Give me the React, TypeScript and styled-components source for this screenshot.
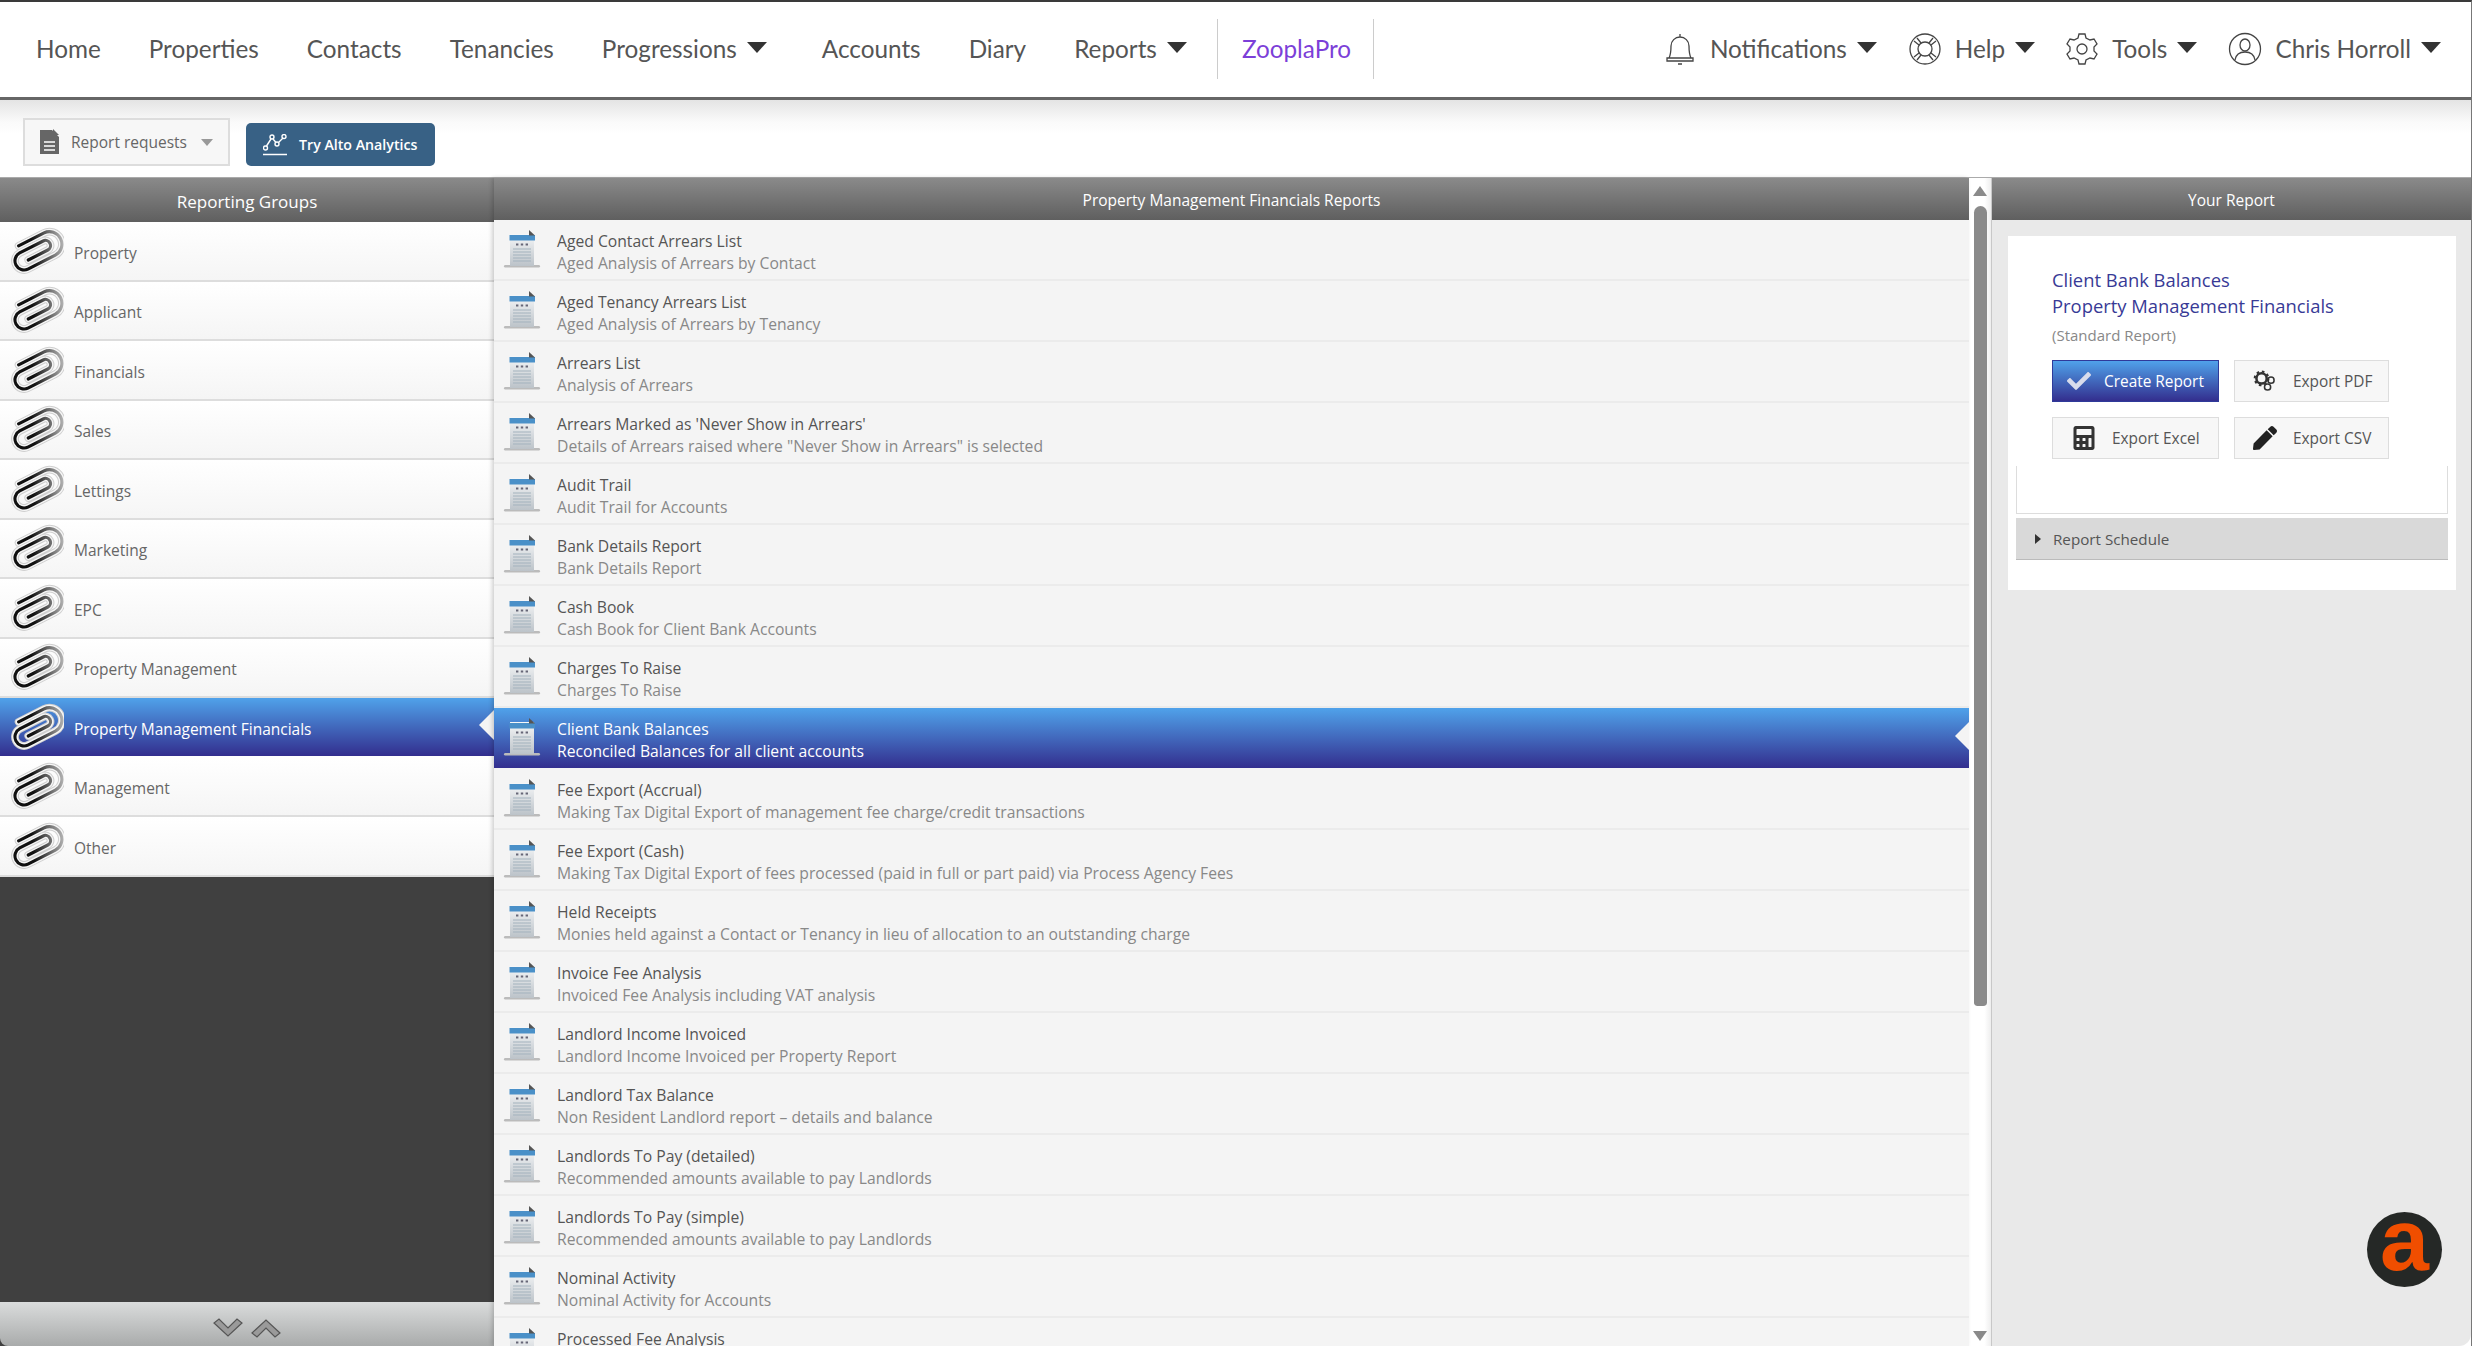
import styled, { createGlobalStyle } from 'styled-components';
import { FaCalculator, FaPen, FaCheck } from 'react-icons/fa';

const GlobalStyle = createGlobalStyle`
  html, body, #root {
    margin: 0;
    height: 100%;
    overflow: hidden;
  }
  body {
    font-family: "Open Sans", "Liberation Sans", sans-serif;
    background: #5c7690;
  }
`;

const Shell = styled.div`
  position: relative;
  height: 100%;
  display: grid;
  grid-template-rows: 98px 78px 1fr;
  box-sizing: border-box;
  border-top: 2px solid #3a3a3a;
  border-right: 1px solid #777;
  background: #fff;
  overflow: hidden;
`;

const NavBar = styled.nav`
  display: flex;
  align-items: center;
  justify-content: space-between;
  border-bottom: 3px solid #666;
  padding: 0 30px 2px 12px;
  font-family: Lato, "Open Sans", sans-serif;
  font-size: 24.3px;
  color: #555;
  background: #fff;
  position: relative;
  z-index: 2;
`;

const NavGroup = styled.div`
  display: flex;
  align-items: center;
`;

const NavLink = styled.a<{ $accent?: boolean; $tail?: number }>`
  display: flex;
  align-items: center;
  white-space: nowrap;
  padding: 0 ${(p) => p.$tail ?? 24}px 0 24px;
  color: ${(p) => (p.$accent ? '#7c3fd8' : '#555')};
`;

const Divider = styled.span`
  width: 1px;
  height: 60px;
  background: #ccc;
`;

const Caret = styled.span`
  width: 0;
  height: 0;
  margin: 0 0 2px 10px;
  border-left: 10px solid transparent;
  border-right: 10px solid transparent;
  border-top: 11px solid #333;
`;

const NavIcon = styled.svg`
  width: 34px;
  height: 34px;
  margin-right: 13px;
  fill: none;
  stroke: #444;
  stroke-width: 1.3;
`;

const ToolRow = styled.div`
  display: flex;
  align-items: flex-start;
  gap: 16px;
  padding: 18px 0 0 23px;
  background: linear-gradient(#e4e4e4, #fafafa 22px, #fff 34px);
  border-bottom: 1px solid #aaa;
`;

const RequestButton = styled.button`
  display: flex;
  align-items: center;
  flex: none;
  width: 207px;
  height: 48px;
  padding: 0 14px;
  white-space: nowrap;
  font: 15.5px "Open Sans", sans-serif;
  color: #666;
  background: #f7f7f7;
  border: 2px solid #ddd;
`;

const RequestCaret = styled.span`
  width: 0;
  height: 0;
  margin-left: 14px;
  border-left: 6px solid transparent;
  border-right: 6px solid transparent;
  border-top: 7px solid #999;
`;

const RequestIcon = styled.svg`
  flex: none;
  width: 21px;
  height: 26px;
  margin-right: 11px;
`;

const AnalyticsButton = styled.button`
  display: flex;
  align-items: center;
  flex: none;
  gap: 12px;
  width: 189px;
  height: 43px;
  margin-top: 5px;
  padding: 0 17px;
  white-space: nowrap;
  font: 600 14.2px "Open Sans", sans-serif;
  color: #fff;
  background: #386185;
  border: none;
  border-radius: 5px;
`;

const AnalyticsIcon = styled.svg`
  flex: none;
  width: 24px;
  height: 22px;
`;

const Main = styled.div`
  display: grid;
  grid-template-columns: 494px 1fr 23px 479px;
  min-height: 0;
`;

const Column = styled.section`
  display: flex;
  flex-direction: column;
  min-height: 0;
  overflow: hidden;
`;

const GroupsColumn = styled(Column)`
  background: #404040;
`;

const ReportsColumn = styled(Column)`
  position: relative;
  z-index: 1;
  box-shadow: -2px 0 4px rgba(0, 0, 0, 0.18);
  background: #f4f4f4;
`;

const Heading = styled.h2<{ $height: number; $size?: number }>`
  flex: none;
  display: flex;
  align-items: center;
  justify-content: center;
  height: ${(p) => p.$height}px;
  box-sizing: border-box;
  margin: 0;
  padding-top: 2px;
  font-size: ${(p) => p.$size ?? 15.5}px;
  font-weight: 400;
  color: #fff;
  background: linear-gradient(#8a8a8a, #5f5f5f);
`;

const GroupList = styled.div`
  flex: 1;
`;

const GroupRow = styled.div<{ $active?: boolean }>`
  position: relative;
  display: flex;
  align-items: center;
  gap: 10px;
  height: 59.5px;
  box-sizing: border-box;
  padding: 4px 0 0 8px;
  font-size: 15.5px;
  color: ${(p) => (p.$active ? '#fff' : '#666')};
  background: ${(p) => (p.$active ? 'linear-gradient(#50a2ea, #332e8e)' : 'linear-gradient(#fff, #f5f5f5)')};
  border-bottom: 2px solid ${(p) => (p.$active ? '#fff' : '#ddd')};
`;

const ClipSvg = styled.svg`
  flex: none;
  width: 56px;
  height: 48px;
  margin-top: -4px;
`;

const Notch = styled.span<{ $shift: number; $size: number }>`
  position: absolute;
  right: 0;
  top: 50%;
  margin-top: ${(p) => -p.$size + p.$shift}px;
  width: 0;
  height: 0;
  border-top: ${(p) => p.$size}px solid transparent;
  border-bottom: ${(p) => p.$size}px solid transparent;
  border-right: ${(p) => p.$size}px solid #f4f4f4;
`;

const CollapseBar = styled.div`
  flex: none;
  display: flex;
  align-items: center;
  justify-content: center;
  gap: 8px;
  height: 44px;
  padding-top: 8px;
  box-sizing: border-box;
  background: linear-gradient(#dadcdc, #a9abab);
  border-bottom-left-radius: 8px;
`;

const ReportList = styled.div`
  flex: 1;
  overflow: hidden;
`;

const ReportRow = styled.div<{ $active?: boolean }>`
  position: relative;
  display: flex;
  align-items: flex-start;
  height: 61px;
  box-sizing: border-box;
  padding: 9px 0 0 9px;
  background: ${(p) => (p.$active ? 'linear-gradient(#50a2ea, #332e8e)' : '#f4f4f4')};
  box-shadow: 0 -2px 0 #ebebeb inset;
  ${(p) => p.$active && 'box-shadow: none; background-clip: padding-box; border-bottom: 1px solid #f4f4f4;'}
`;

const ReportIconSvg = styled.svg`
  flex: none;
  width: 38px;
  height: 40px;
  margin-right: 16px;
`;

const ReportText = styled.div`
  display: flex;
  flex-direction: column;
  gap: 1px;
  margin-top: 2px;
  white-space: nowrap;
`;

const ReportTitle = styled.span<{ $active?: boolean }>`
  font-size: 15.7px;
  line-height: 21px;
  color: ${(p) => (p.$active ? '#fff' : '#555')};
`;

const ReportDesc = styled.span<{ $active?: boolean }>`
  font-size: 15.7px;
  line-height: 21px;
  color: ${(p) => (p.$active ? '#fff' : '#888')};
`;

const ScrollTrack = styled.div`
  position: relative;
  display: flex;
  flex-direction: column;
  align-items: center;
  padding-top: 8px;
  background: linear-gradient(90deg, #fff 70%, #eee);
  border-right: 1px solid #c8c8c8;
  box-sizing: border-box;
`;

const ScrollArrow = styled.span<{ $down?: boolean }>`
  width: 0;
  height: 0;
  border-left: 7px solid transparent;
  border-right: 7px solid transparent;
  ${(p) => (p.$down ? 'border-top: 10px solid #8a8a8a;' : 'border-bottom: 10px solid #8a8a8a;')}
  ${(p) => p.$down && 'margin-top: auto; margin-bottom: 5px;'}
`;

const ScrollThumb = styled.div`
  width: 13px;
  height: 800px;
  margin-top: 10px;
  border-radius: 7px 7px 4px 4px;
  background: #8a8a8a;
`;

const SummaryColumn = styled(Column)`
  background: #e9e9e9;
  border-bottom-right-radius: 12px;
`;

const Card = styled.div`
  margin: 16px 15px 0 16px;
  height: 354px;
  padding: 31px 8px 0;
  box-sizing: border-box;
  background: #fff;
`;

const CardBody = styled.div`
  padding-left: 36px;
`;

const ReportName = styled.div`
  font-size: 18.4px;
  line-height: 26px;
  color: #383a96;
`;

const ReportKind = styled.div`
  margin-top: 5px;
  font-size: 15px;
  line-height: 22px;
  color: #888;
`;

const ButtonGrid = styled.div`
  display: grid;
  grid-template-columns: 167px 155px;
  grid-auto-rows: 42px;
  gap: 15px;
  margin-top: 14px;
`;

const ActionButton = styled.button<{ $primary?: boolean; $inset?: number }>`
  display: flex;
  align-items: center;
  gap: ${(p) => (p.$primary ? 13 : 16)}px;
  box-sizing: border-box;
  padding: 0 0 0 ${(p) => p.$inset ?? 14}px;
  white-space: nowrap;
  font: 15.4px "Open Sans", sans-serif;
  color: ${(p) => (p.$primary ? '#fff' : '#555')};
  background: ${(p) => (p.$primary ? 'linear-gradient(#50a2ea, #332e8e)' : '#f7f7f7')};
  border: 1px solid ${(p) => (p.$primary ? '#2f3a9a' : '#ddd')};
  svg {
    flex: none;
    width: 24px;
    height: 24px;
  }
`;

const ScheduleBox = styled.div`
  height: 47px;
  margin-top: 7px;
  border: 1px solid #ddd;
  border-top: none;
`;

const ScheduleBar = styled.div`
  display: flex;
  align-items: center;
  gap: 12px;
  height: 41px;
  margin-top: 4px;
  padding-left: 19px;
  font-size: 15.2px;
  color: #555;
  background: #d9d9d9;
  border-bottom: 1px solid #bbb;
`;

const ScheduleArrow = styled.span`
  width: 0;
  height: 0;
  border-top: 5px solid transparent;
  border-bottom: 5px solid transparent;
  border-left: 6px solid #333;
`;

const AltoBadge = styled.div`
  position: absolute;
  right: 29px;
  bottom: 59px;
  display: flex;
  align-items: center;
  justify-content: center;
  width: 75px;
  height: 75px;
  border-radius: 50%;
  background: #252826;
  color: #f04e00;
  font: 700 88px/1 "Liberation Sans", sans-serif;
`;

const AltoLetter = styled.span`
  display: block;
  margin-top: -20px;
`;

const groups = [
  'Property',
  'Applicant',
  'Financials',
  'Sales',
  'Lettings',
  'Marketing',
  'EPC',
  'Property Management',
  'Property Management Financials',
  'Management',
  'Other',
];

const reports: [string, string][] = [
  ['Aged Contact Arrears List', 'Aged Analysis of Arrears by Contact'],
  ['Aged Tenancy Arrears List', 'Aged Analysis of Arrears by Tenancy'],
  ['Arrears List', 'Analysis of Arrears'],
  ["Arrears Marked as 'Never Show in Arrears'", 'Details of Arrears raised where "Never Show in Arrears" is selected'],
  ['Audit Trail', 'Audit Trail for Accounts'],
  ['Bank Details Report', 'Bank Details Report'],
  ['Cash Book', 'Cash Book for Client Bank Accounts'],
  ['Charges To Raise', 'Charges To Raise'],
  ['Client Bank Balances', 'Reconciled Balances for all client accounts'],
  ['Fee Export (Accrual)', 'Making Tax Digital Export of management fee charge/credit transactions'],
  ['Fee Export (Cash)', 'Making Tax Digital Export of fees processed (paid in full or part paid) via Process Agency Fees'],
  ['Held Receipts', 'Monies held against a Contact or Tenancy in lieu of allocation to an outstanding charge'],
  ['Invoice Fee Analysis', 'Invoiced Fee Analysis including VAT analysis'],
  ['Landlord Income Invoiced', 'Landlord Income Invoiced per Property Report'],
  ['Landlord Tax Balance', 'Non Resident Landlord report – details and balance'],
  ['Landlords To Pay (detailed)', 'Recommended amounts available to pay Landlords'],
  ['Landlords To Pay (simple)', 'Recommended amounts available to pay Landlords'],
  ['Nominal Activity', 'Nominal Activity for Accounts'],
  ['Processed Fee Analysis', ''],
];

function Paperclip() {
  const wire = 'M-11 12 V-14 A11 11 0 0 1 11 -14 V14 A8 8 0 0 1 -5 14 V-10 A4.5 4.5 0 0 1 4 -10 V10';
  return (
    <ClipSvg viewBox="0 0 56 48" fill="none" strokeLinecap="round">
      <defs>
        <linearGradient id="clipInk" x1="-10" y1="26" x2="10" y2="-26" gradientUnits="userSpaceOnUse">
          <stop offset="0.45" stopColor="#111" />
          <stop offset="0.95" stopColor="#b0b0b0" />
        </linearGradient>
      </defs>
      <g transform="translate(28 24) rotate(63) scale(1.13 1.1)">
        <path d={wire} stroke="#cfcfcf" strokeWidth="7" />
        <path d={wire} stroke="#f6f6f6" strokeWidth="5.2" />
        <path d={wire} stroke="url(#clipInk)" strokeWidth="2.8" />
      </g>
    </ClipSvg>
  );
}

function ReportIcon() {
  return (
    <ReportIconSvg viewBox="0 0 38 40">
      <defs>
        <linearGradient id="pageFill" x1="0" y1="0" x2="0" y2="1">
          <stop offset="0" stopColor="#f6f7f8" />
          <stop offset="1" stopColor="#bcc3c9" />
        </linearGradient>
      </defs>
      <rect x="1" y="36" width="36" height="2.5" rx="1.2" fill="#bbb" />
      <rect x="7" y="5" width="24" height="32" fill="url(#pageFill)" />
      <rect x="6.5" y="6" width="25.5" height="5.5" fill="#4a90c8" />
      <path d="M26 1 L32 6.5 L26 6.5 Z" fill="#555" />
      <path d="M13 15.5h2.4M17.8 15.5h2.4M22.6 15.5h2.4" stroke="#667" strokeWidth="2" />
      <path d="M10 20h18M10 23h18M10 26h18M10 29h18M10 32h18" stroke="#a3b2bd" strokeWidth="1" />
    </ReportIconSvg>
  );
}

function Gears() {
  return (
    <svg viewBox="0 0 28 24" fill="none" stroke="#333">
      <circle cx="10" cy="9" r="6" strokeWidth="3" />
      <circle cx="10" cy="9" r="8" strokeWidth="2.4" strokeDasharray="3 3.3" />
      <circle cx="21" cy="11" r="3.6" strokeWidth="1.8" />
      <circle cx="17" cy="19" r="3.6" strokeWidth="1.8" />
    </svg>
  );
}

function Chevron({ up }: { up?: boolean }) {
  const d = up ? 'M1 15 L15 2 L29 15 L24 19 L15 10 L6 19 Z' : 'M1 5 L15 18 L29 5 L24 1 L15 10 L6 1 Z';
  return (
    <svg width="30" height="20" viewBox="0 0 30 20">
      <path d={d} fill="#9a9a9a" stroke="#555" strokeWidth="1.2" />
    </svg>
  );
}

export default function App() {
  return (
    <>
      <GlobalStyle />
      <Shell>
        <NavBar>
          <NavGroup>
            <NavLink>Home</NavLink>
            <NavLink>Properties</NavLink>
            <NavLink>Contacts</NavLink>
            <NavLink>Tenancies</NavLink>
            <NavLink $tail={31}>Progressions<Caret /></NavLink>
            <NavLink>Accounts</NavLink>
            <NavLink>Diary</NavLink>
            <NavLink $tail={30}>Reports<Caret /></NavLink>
            <Divider />
            <NavLink $accent $tail={22}>ZooplaPro</NavLink>
            <Divider />
          </NavGroup>
          <NavGroup>
            <NavLink $tail={7}>
              <NavIcon viewBox="0 0 34 34">
                <path d="M6 26 C8 22 8 18 8 14 a9 9 0 0 1 18 0 C26 18 26 22 28 26 Z M4 26h26v3H4z M17 2v3 M15 32h4" />
              </NavIcon>
              Notifications<Caret />
            </NavLink>
            <NavLink $tail={6}>
              <NavIcon viewBox="0 0 34 34">
                <circle cx="17" cy="17" r="15" />
                <circle cx="17" cy="17" r="7" />
                <path d="M9 6l4 5 M25 6l-4 5 M9 28l4-5 M25 28l-4-5 M6 9l5 4 M28 9l-5 4 M6 25l5-4 M28 25l-5-4" />
              </NavIcon>
              Help<Caret />
            </NavLink>
            <NavLink $tail={7}>
              <NavIcon viewBox="0 0 34 34">
                <path d="M14 2h6l1 4 4 2 4-1 3 5-3 3v4l3 3-3 5-4-1-4 2-1 4h-6l-1-4-4-2-4 1-3-5 3-3v-4l-3-3 3-5 4 1 4-2z" />
                <circle cx="17" cy="17" r="5" />
              </NavIcon>
              Tools<Caret />
            </NavLink>
            <NavLink $tail={0}>
              <NavIcon viewBox="0 0 34 34">
                <circle cx="17" cy="17" r="15.5" />
                <ellipse cx="17" cy="13" rx="5" ry="6" />
                <path d="M7 28c1-6 5-8 10-8s9 2 10 8" />
              </NavIcon>
              Chris Horroll<Caret />
            </NavLink>
          </NavGroup>
        </NavBar>

        <ToolRow>
          <RequestButton>
            <RequestIcon viewBox="0 0 21 26">
              <path d="M1 1h12l7 7v17H1z" fill="#666" />
              <path d="M14 0l6 6h-6z" fill="#666" />
              <path d="M5 13h11M5 17h11M5 21h11" stroke="#fff" strokeWidth="1.6" />
            </RequestIcon>
            Report requests
            <RequestCaret />
          </RequestButton>
          <AnalyticsButton>
            <AnalyticsIcon viewBox="0 0 24 22" fill="none" stroke="#fff" strokeWidth="1.4">
              <circle cx="2.5" cy="14" r="2" />
              <circle cx="9" cy="3" r="2" />
              <circle cx="14" cy="10" r="2" />
              <circle cx="21" cy="2.5" r="2" />
              <path d="M3.5 12L8 5 M10 5l3 3.5 M15.5 8.5L20 4 M0 20.5h24" />
            </AnalyticsIcon>
            Try Alto Analytics
          </AnalyticsButton>
        </ToolRow>

        <Main>
          <GroupsColumn>
            <Heading $height={44} $size={17}>Reporting Groups</Heading>
            <GroupList>
              {groups.map((g) => {
                const active = g === 'Property Management Financials';
                return (
                  <GroupRow key={g} $active={active}>
                    <Paperclip />
                    {g}
                    {active && <Notch $shift={-2} $size={15} />}
                  </GroupRow>
                );
              })}
            </GroupList>
            <CollapseBar>
              <Chevron />
              <Chevron up />
            </CollapseBar>
          </GroupsColumn>

          <ReportsColumn>
            <Heading $height={42}>Property Management Financials Reports</Heading>
            <ReportList>
              {reports.map(([title, desc]) => {
                const active = title === 'Client Bank Balances';
                return (
                  <ReportRow key={title} $active={active}>
                    <ReportIcon />
                    <ReportText>
                      <ReportTitle $active={active}>{title}</ReportTitle>
                      <ReportDesc $active={active}>{desc}</ReportDesc>
                    </ReportText>
                    {active && <Notch $shift={-2} $size={14} />}
                  </ReportRow>
                );
              })}
            </ReportList>
          </ReportsColumn>

          <ScrollTrack>
            <ScrollArrow />
            <ScrollThumb />
            <ScrollArrow $down />
          </ScrollTrack>

          <SummaryColumn>
            <Heading $height={42}>Your Report</Heading>
            <Card>
              <CardBody>
                <ReportName>Client Bank Balances</ReportName>
                <ReportName>Property Management Financials</ReportName>
                <ReportKind>(Standard Report)</ReportKind>
                <ButtonGrid>
                  <ActionButton $primary><FaCheck color="#d8dcec" />Create Report</ActionButton>
                  <ActionButton $inset={18}><Gears />Export PDF</ActionButton>
                  <ActionButton $inset={19}><FaCalculator color="#333" />Export Excel</ActionButton>
                  <ActionButton $inset={18}><FaPen color="#222" />Export CSV</ActionButton>
                </ButtonGrid>
              </CardBody>
              <ScheduleBox />
              <ScheduleBar>
                <ScheduleArrow />
                Report Schedule
              </ScheduleBar>
            </Card>
          </SummaryColumn>
        </Main>

        <AltoBadge><AltoLetter>a</AltoLetter></AltoBadge>
      </Shell>
    </>
  );
}
